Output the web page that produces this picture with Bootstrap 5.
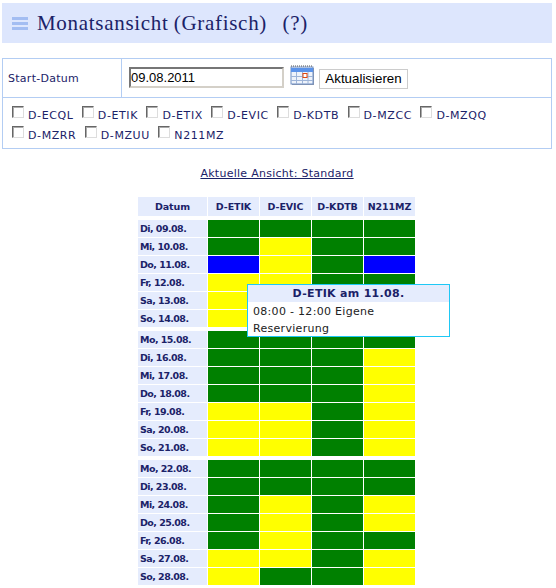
<!DOCTYPE html>
<html lang="de">
<head>
<meta charset="utf-8">
<title>Monatsansicht</title>
<link rel="stylesheet" href="https://cdn.jsdelivr.net/npm/bootstrap@5.3.0/dist/css/bootstrap.min.css">
<style>
body{background:#fff;color:#1b2268;font:11px/14px "DejaVu Sans",sans-serif;letter-spacing:.27px;padding:3px 4px 0 2px;overflow:hidden}
.pagehead{height:40px;background:#dde6fd;padding-left:10px;gap:9px}
.pagehead h1{margin:0;font:21px/1 "Liberation Serif",serif;letter-spacing:.7px;word-spacing:-.8px;color:#1b2268}
.burger{width:16px;height:13px;border-top:3px solid #a3bdf2;border-bottom:3px solid #a3bdf2}
.burger::after{content:"";display:block;height:3px;margin-top:2px;background:#a3bdf2}
.formbox{margin-top:15px;border:1px solid #b3cdf3;height:91px}
.formtop{height:39px;border-bottom:1px solid #b3cdf3}
.lblcell{width:119px;border-right:1px solid #b3cdf3;padding:1px 0 0 5px}
.fieldcell{padding-left:7px;gap:6px}
.dateinp{width:155px;height:21px;border:2px solid;border-color:#767676 #d4d0c8 #d4d0c8 #767676;padding:0;font:13px "Liberation Sans",sans-serif;letter-spacing:0;color:#000;margin-top:-1px}
.calpic{margin-top:-7px}
.upd{height:20px;width:89px;padding:0;border:1px solid #ccc;background:#fff;font:13.33px/18px "Liberation Sans",sans-serif;letter-spacing:0;color:#000;margin:1px 0 0 -1px}
.tails{padding:11px 6px 0 9px;column-gap:8.4px;row-gap:6px;letter-spacing:.6px}
.tails label{display:flex;align-items:center;gap:4px;height:14px}
.tailbox{appearance:none;width:12px;height:12px;margin:0 0 8px;border:1px solid;border-color:#666 #ddd #ddd #666;box-shadow:inset 1px 1px 0 #aaa;background:#fff}
.viewlink{margin-top:18px;height:14px}
.viewlink a{color:#1b2268}
.plan{margin:15px 0 0 135px;border-collapse:separate;border-spacing:1px;font-weight:700;font-size:9.5px;line-height:12px;letter-spacing:-.55px}
.plan th{background:#e5ecfd;height:19px;text-align:center;padding:0;width:51px;font-weight:700;letter-spacing:-.1px}
.plan th:first-child{width:69px}
.plan td{height:17px;padding:0}
.plan .day{background:#e5ecfd;padding-left:2px}
.plan .gapline td,.plan .headgap td{height:2px}
.g{background:#008000}.y{background:#ff0}.b{background:#00f}
.planwrap{position:relative}
.tip{position:absolute;left:245px;top:88px;width:203px;height:53px;background:#fff;border:1px solid #1fc8f5;letter-spacing:.3px}
.tiphead{background:#e5ecfd;height:17px;line-height:17px;text-align:center;font-weight:700}
.tipbody{padding:1px 5px 0;color:#222;line-height:17px}
</style>
</head>
<body>
<div class="pagehead d-flex align-items-center">
  <span class="burger"></span>
  <h1>Monatsansicht (Grafisch) &nbsp; (?)</h1>
</div>
<div class="formbox">
  <div class="formtop d-flex">
    <div class="lblcell d-flex align-items-center">Start-Datum</div>
    <div class="fieldcell d-flex align-items-center">
      <input class="dateinp" type="text" value="09.08.2011">
      <svg class="calpic" width="24" height="20" viewBox="0 0 24 20" aria-hidden="true">
        <rect x="2" y="3" width="22" height="17" fill="#8c94a8"/>
        <rect x="1" y="2" width="22" height="17" fill="#eef3fb" stroke="#6f8fc4" stroke-width="1"/>
        <rect x="1" y="3" width="22" height="4" fill="#5b93ea"/>
        <path d="M1 1h22" stroke="#555" stroke-width="1" stroke-dasharray="1 1"/>
        <path d="M1 11.500h22M1 15.500h22M6.500 7v12M12.500 7v12M18 7v12" stroke="#9db4d8" stroke-width="1" fill="none"/>
        <rect x="13" y="8.500" width="4" height="4" fill="#fff" stroke="#e2470f" stroke-width="1"/>
      </svg>
      <button class="upd" type="button">Aktualisieren</button>
    </div>
  </div>
  <div class="tails d-flex flex-wrap">
    <label><input class="tailbox" type="checkbox">D-ECQL</label>
    <label><input class="tailbox" type="checkbox">D-ETIK</label>
    <label><input class="tailbox" type="checkbox">D-ETIX</label>
    <label><input class="tailbox" type="checkbox">D-EVIC</label>
    <label><input class="tailbox" type="checkbox">D-KDTB</label>
    <label><input class="tailbox" type="checkbox">D-MZCC</label>
    <label><input class="tailbox" type="checkbox">D-MZQQ</label>
    <label><input class="tailbox" type="checkbox">D-MZRR</label>
    <label><input class="tailbox" type="checkbox">D-MZUU</label>
    <label><input class="tailbox" type="checkbox">N211MZ</label>
  </div>
</div>
<div class="viewlink text-center"><a href="#">Aktuelle Ansicht: Standard</a></div>
<div class="planwrap">
<table class="plan">
<thead><tr><th>Datum</th><th>D-ETIK</th><th>D-EVIC</th><th>D-KDTB</th><th>N211MZ</th></tr></thead>
<tbody>
<tr class="headgap"><td colspan="5"></td></tr>
<tr><td class="day">Di, 09.08.</td><td class="g"></td><td class="g"></td><td class="g"></td><td class="g"></td></tr>
<tr><td class="day">Mi, 10.08.</td><td class="g"></td><td class="y"></td><td class="g"></td><td class="g"></td></tr>
<tr><td class="day">Do, 11.08.</td><td class="b"></td><td class="y"></td><td class="g"></td><td class="b"></td></tr>
<tr><td class="day">Fr, 12.08.</td><td class="y"></td><td class="y"></td><td class="g"></td><td class="g"></td></tr>
<tr><td class="day">Sa, 13.08.</td><td class="y"></td><td class="y"></td><td class="g"></td><td class="g"></td></tr>
<tr><td class="day">So, 14.08.</td><td class="y"></td><td class="y"></td><td class="g"></td><td class="g"></td></tr>
<tr class="gapline"><td colspan="5"></td></tr>
<tr><td class="day">Mo, 15.08.</td><td class="g"></td><td class="g"></td><td class="g"></td><td class="g"></td></tr>
<tr><td class="day">Di, 16.08.</td><td class="g"></td><td class="g"></td><td class="g"></td><td class="y"></td></tr>
<tr><td class="day">Mi, 17.08.</td><td class="g"></td><td class="g"></td><td class="g"></td><td class="y"></td></tr>
<tr><td class="day">Do, 18.08.</td><td class="g"></td><td class="g"></td><td class="g"></td><td class="y"></td></tr>
<tr><td class="day">Fr, 19.08.</td><td class="y"></td><td class="y"></td><td class="g"></td><td class="y"></td></tr>
<tr><td class="day">Sa, 20.08.</td><td class="y"></td><td class="y"></td><td class="g"></td><td class="y"></td></tr>
<tr><td class="day">So, 21.08.</td><td class="y"></td><td class="y"></td><td class="g"></td><td class="y"></td></tr>
<tr class="gapline"><td colspan="5"></td></tr>
<tr><td class="day">Mo, 22.08.</td><td class="g"></td><td class="g"></td><td class="g"></td><td class="g"></td></tr>
<tr><td class="day">Di, 23.08.</td><td class="g"></td><td class="g"></td><td class="g"></td><td class="g"></td></tr>
<tr><td class="day">Mi, 24.08.</td><td class="g"></td><td class="y"></td><td class="g"></td><td class="y"></td></tr>
<tr><td class="day">Do, 25.08.</td><td class="g"></td><td class="y"></td><td class="g"></td><td class="y"></td></tr>
<tr><td class="day">Fr, 26.08.</td><td class="g"></td><td class="y"></td><td class="g"></td><td class="g"></td></tr>
<tr><td class="day">Sa, 27.08.</td><td class="y"></td><td class="y"></td><td class="g"></td><td class="y"></td></tr>
<tr><td class="day">So, 28.08.</td><td class="y"></td><td class="g"></td><td class="g"></td><td class="y"></td></tr>
</tbody>
</table>
<div class="tip">
  <div class="tiphead">D-ETIK am 11.08.</div>
  <div class="tipbody">08:00 - 12:00 Eigene Reservierung</div>
</div>
</div>
<script src="https://cdn.jsdelivr.net/npm/bootstrap@5.3.0/dist/js/bootstrap.bundle.min.js"></script>
</body>
</html>
